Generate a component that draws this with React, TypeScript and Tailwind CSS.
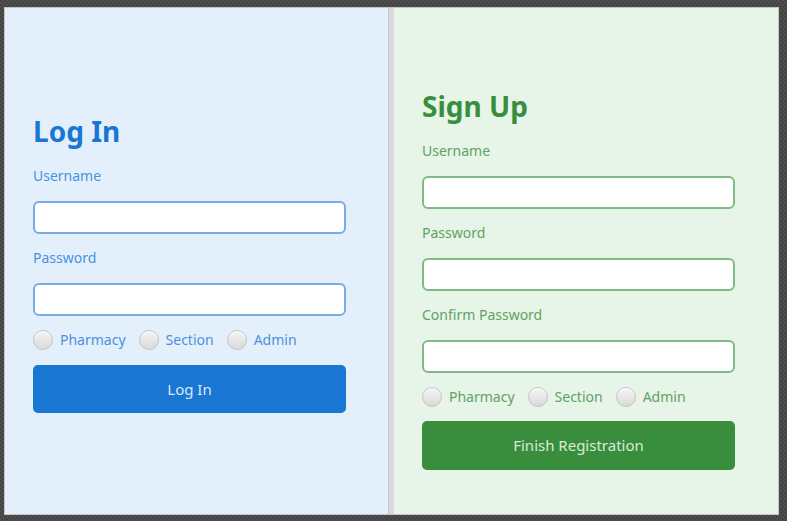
import React from "react";

const font = { fontFamily: '"Noto Sans", "Open Sans", sans-serif' };

function Radio({ label, color }: { label: string; color: string }) {
  return (
    <label className="flex items-center gap-[7px]">
      <span className="w-[20px] h-[20px] rounded-full border border-[#c4c4c4] bg-gradient-to-b from-[#f5f5f5] to-[#d9d9d9] shadow-[inset_0_1px_0_#ffffff]" />
      <span className={`text-[14px] leading-[20px] ${color}`}>{label}</span>
    </label>
  );
}

function Field({ label, labelColor, border }: { label: string; labelColor: string; border: string }) {
  return (
    <div className="flex flex-col">
      <div className={`text-[14px] leading-[20px] mt-[14px] ${labelColor}`}>{label}</div>
      <div className={`mt-[15px] w-[313px] h-[33px] bg-white rounded-[6px] border-2 ${border}`} />
    </div>
  );
}

export default function App() {
  return (
    <div
      className="w-[787px] h-[521px] bg-[#484848] bg-[repeating-conic-gradient(#4f4f4f_0%_25%,#434343_0%_50%)] bg-[length:4px_4px] pt-[7px] pl-[4px]"
      style={font}
    >
      <div className="w-[775px] h-[508px] border border-[#c6c6c6] flex">
        {/* Left */}
        <div className="w-[383px] h-full bg-[#e3f0fc] pl-[28px] pt-[105px] flex flex-col">
          <h1 className="text-[28px] leading-[36px] font-bold text-[#1976d2]">Log In</h1>
          <div className="mt-[3px]" />
          <Field label="Username" labelColor="text-[#4a90dc]" border="border-[#78ace4]" />
          <Field label="Password" labelColor="text-[#4a90dc]" border="border-[#78ace4]" />
          <div className="flex items-center gap-[13px] mt-[14px] h-[20px]">
            <Radio label="Pharmacy" color="text-[#4a90dc]" />
            <Radio label="Section" color="text-[#4a90dc]" />
            <Radio label="Admin" color="text-[#4a90dc]" />
          </div>
          <button className="mt-[15px] w-[313px] h-[48px] rounded-[5px] bg-[#1976d2] text-[15px] text-[#dbe8f6]">
            Log In
          </button>
        </div>
        {/* Divider */}
        <div className="w-[8px] h-full bg-[#dadada] border-l border-[#c8c8c8] border-r-2 border-r-[#f0f0f0]" />
        {/* Right */}
        <div className="flex-1 h-full bg-[#e7f4e8] pl-[26px] pt-[80px] flex flex-col">
          <h1 className="text-[28px] leading-[36px] font-bold text-[#388e3c]">Sign Up</h1>
          <div className="mt-[3px]" />
          <Field label="Username" labelColor="text-[#5ea362]" border="border-[#81ba84]" />
          <Field label="Password" labelColor="text-[#5ea362]" border="border-[#81ba84]" />
          <Field label="Confirm Password" labelColor="text-[#5ea362]" border="border-[#81ba84]" />
          <div className="flex items-center gap-[13px] mt-[14px] h-[20px]">
            <Radio label="Pharmacy" color="text-[#5ea362]" />
            <Radio label="Section" color="text-[#5ea362]" />
            <Radio label="Admin" color="text-[#5ea362]" />
          </div>
          <button className="mt-[14px] w-[313px] h-[49px] rounded-[5px] bg-[#388e3c] text-[15px] text-[#d9ecd9]">
            Finish Registration
          </button>
        </div>
      </div>
    </div>
  );
}
